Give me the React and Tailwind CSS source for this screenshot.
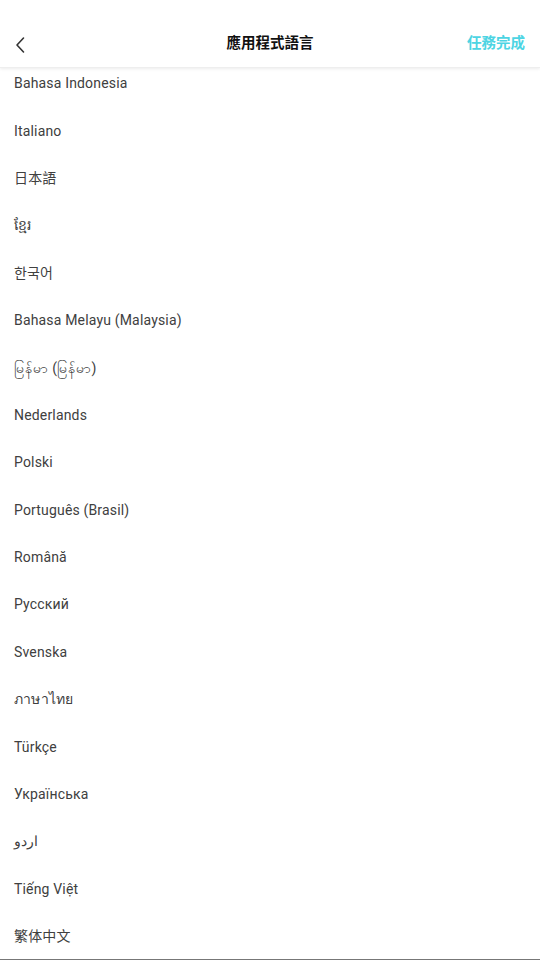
import React from 'react';

const languages = [
  'Bahasa Indonesia',
  'Italiano',
  '日本語',
  'ខ្មែរ',
  '한국어',
  'Bahasa Melayu (Malaysia)',
  'မြန်မာ (မြန်မာ)',
  'Nederlands',
  'Polski',
  'Português (Brasil)',
  'Română',
  'Русский',
  'Svenska',
  'ภาษาไทย',
  'Türkçe',
  'Українська',
  'اردو',
  'Tiếng Việt',
  '繁体中文',
];

const font = { fontFamily: 'Roboto, "Noto Sans", "Noto Sans CJK TC", sans-serif' };

const App = () => {
  return (
    <div
      className="flex flex-col h-[960px] w-[540px] bg-white overflow-hidden border-b border-[#777]"
      style={font}
    >
      {/* Header */}
      <div className="relative z-10 grid grid-cols-[1fr_auto_1fr] items-center h-[68px] shrink-0 px-[14px] pt-[22px] bg-white shadow-[0_1px_3px_rgba(0,0,0,0.08)] border-b border-[#eeeeee]">
        <button className="w-[20px] h-[20px] flex items-center justify-start">
          <svg width="12" height="18" viewBox="0 0 12 18" fill="none">
            <path d="M9.5 2 L3 9 L9.5 16" stroke="#333" strokeWidth="1.6" strokeLinecap="round" strokeLinejoin="round" />
          </svg>
        </button>
        <h1 className="text-[14.5px] font-bold text-[#111] leading-none">應用程式語言</h1>
        <button className="justify-self-end text-[14.5px] font-bold text-[#4dd4e3] leading-none mr-[1px]">任務完成</button>
      </div>

      {/* Language list */}
      <div className="flex-1 overflow-hidden">
        <ul className="-mt-[8px]">
          {languages.map((lang) => (
            <li key={lang} className="h-[47.4px] flex items-center px-[14px] text-[14px] tracking-[0.17px] text-[#404040]">
              <span dir="auto">{lang}</span>
            </li>
          ))}
        </ul>
      </div>
    </div>
  );
};

export default App;
